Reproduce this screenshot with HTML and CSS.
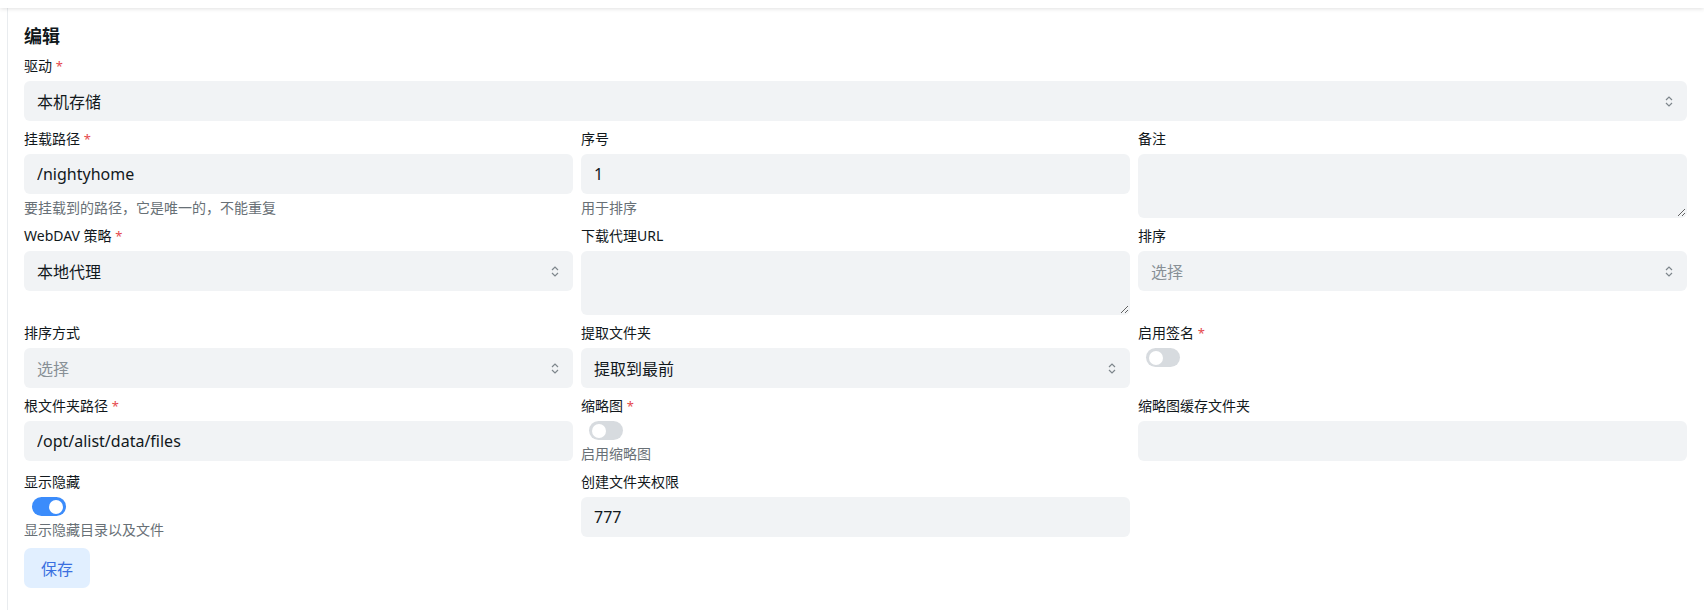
FILE: index.html
```html
<!DOCTYPE html>
<html lang="zh-CN">
<head>
  <meta charset="UTF-8">
  <meta name="viewport" content="width=device-width, initial-scale=1.0">
  <title>编辑存储</title>
  <link rel="stylesheet" href="styles.css">
</head>
<body>
  <div class="topbar"></div>
  <div class="main">
    <h2 class="title">编辑</h2>
    <div class="form-grid">
      <div class="field full">
        <label class="label">驱动 <span class="req">*</span></label>
        <div class="select">
          <span>本机存储</span>
          <svg class="chevron" width="8" height="13" viewBox="0 0 8 13"><path d="M1 5 L4 2 L7 5 M1 8 L4 11 L7 8" /></svg>
        </div>
      </div>

      <!-- row 1 -->
      <div class="field">
        <label class="label">挂载路径 <span class="req">*</span></label>
        <input class="input" type="text" value="/nightyhome">
        <div class="helper">要挂载到的路径，它是唯一的，不能重复</div>
      </div>
      <div class="field">
        <label class="label">序号</label>
        <input class="input" type="text" value="1">
        <div class="helper">用于排序</div>
      </div>
      <div class="field">
        <label class="label">备注</label>
        <textarea class="textarea"></textarea>
      </div>

      <!-- row 2 -->
      <div class="field">
        <label class="label">WebDAV 策略 <span class="req">*</span></label>
        <div class="select">
          <span>本地代理</span>
          <svg class="chevron" width="8" height="13" viewBox="0 0 8 13"><path d="M1 5 L4 2 L7 5 M1 8 L4 11 L7 8" /></svg>
        </div>
      </div>
      <div class="field">
        <label class="label">下载代理URL</label>
        <textarea class="textarea"></textarea>
      </div>
      <div class="field">
        <label class="label">排序</label>
        <div class="select">
          <span class="placeholder">选择</span>
          <svg class="chevron" width="8" height="13" viewBox="0 0 8 13"><path d="M1 5 L4 2 L7 5 M1 8 L4 11 L7 8" /></svg>
        </div>
      </div>

      <!-- row 3 -->
      <div class="field">
        <label class="label">排序方式</label>
        <div class="select">
          <span class="placeholder">选择</span>
          <svg class="chevron" width="8" height="13" viewBox="0 0 8 13"><path d="M1 5 L4 2 L7 5 M1 8 L4 11 L7 8" /></svg>
        </div>
      </div>
      <div class="field">
        <label class="label">提取文件夹</label>
        <div class="select">
          <span>提取到最前</span>
          <svg class="chevron" width="8" height="13" viewBox="0 0 8 13"><path d="M1 5 L4 2 L7 5 M1 8 L4 11 L7 8" /></svg>
        </div>
      </div>
      <div class="field">
        <label class="label">启用签名 <span class="req">*</span></label>
        <span class="switch"><span class="knob"></span></span>
      </div>

      <!-- row 4 -->
      <div class="field">
        <label class="label">根文件夹路径 <span class="req">*</span></label>
        <input class="input" type="text" value="/opt/alist/data/files">
      </div>
      <div class="field">
        <label class="label">缩略图 <span class="req">*</span></label>
        <span class="switch"><span class="knob"></span></span>
        <div class="helper">启用缩略图</div>
      </div>
      <div class="field">
        <label class="label">缩略图缓存文件夹</label>
        <input class="input" type="text" value="">
      </div>

      <!-- row 5 -->
      <div class="field">
        <label class="label">显示隐藏</label>
        <span class="switch on"><span class="knob"></span></span>
        <div class="helper">显示隐藏目录以及文件</div>
      </div>
      <div class="field">
        <label class="label">创建文件夹权限</label>
        <input class="input" type="text" value="777">
      </div>
    </div>
    <button class="save-btn">保存</button>
  </div>
</body>
</html>
```

FILE: styles.css
```css
/* page */
body {
  margin: 0;
  font-family: "Noto Sans", "Noto Sans CJK SC", sans-serif;
  color: #11181c;
  background: #fff;
}
.topbar {
  height: 8px;
  background: #fff;
  box-shadow: 0 1px 4px rgba(0, 0, 0, 0.12);
  position: relative;
  z-index: 1;
}
.main {
  display: flex;
  flex-direction: column;
  gap: 8px;
  margin-left: 7px;
  border-left: 1px solid #e9ecef;
  padding: 16px 17px 16px 16px;
  min-height: calc(100vh - 40px);
}
.title {
  margin: 0;
  font-size: 18px;
  line-height: 24px;
  font-weight: 700;
}

/* form */
.form-grid {
  display: grid;
  grid-template-columns: repeat(3, 1fr);
  gap: 8px;
  align-items: start;
}
.field {
  display: flex;
  flex-direction: column;
  align-items: stretch;
}
.field.full {
  grid-column: 1 / 4;
}
.label {
  font-size: 14px;
  line-height: 20px;
  font-weight: 400;
  margin-bottom: 5px;
}
.req {
  color: #e5484d;
  font-size: 13px;
}
.helper {
  font-size: 14px;
  line-height: 20px;
  color: #687076;
  margin-top: 4px;
}
.input,
.select,
.textarea {
  box-sizing: border-box;
  width: 100%;
  border: 1px solid transparent;
  border-radius: 6px;
  background: #f1f3f5;
  font-family: inherit;
  font-size: 16px;
  color: #11181c;
  outline: none;
}
.input {
  height: 40px;
  padding: 0 12px;
}
.textarea {
  height: 64px;
  padding: 8px 12px;
  resize: vertical;
  display: block;
}
.select {
  height: 40px;
  padding: 0 12px;
  display: flex;
  align-items: center;
  justify-content: space-between;
}
.placeholder {
  color: #889096;
}
.chevron {
  margin-right: 1px;
}
.chevron path {
  fill: none;
  stroke: #7e868c;
  stroke-width: 1.2;
}

/* switch */
.switch {
  align-self: flex-start;
  margin-left: 8px;
  width: 34px;
  height: 19px;
  border-radius: 10px;
  background: #d7dbdf;
  position: relative;
}
.switch .knob {
  position: absolute;
  top: 2.5px;
  left: 3px;
  width: 14px;
  height: 14px;
  border-radius: 50%;
  background: #fff;
}
.switch.on {
  background: #3b8cfb;
}
.switch.on .knob {
  left: 17px;
}

.save-btn {
  align-self: flex-start;
  height: 40px;
  padding: 0 17px;
  border: none;
  border-radius: 7px;
  background: #e1efff;
  color: #3a6fe0;
  font-family: inherit;
  font-size: 16px;
}
```
